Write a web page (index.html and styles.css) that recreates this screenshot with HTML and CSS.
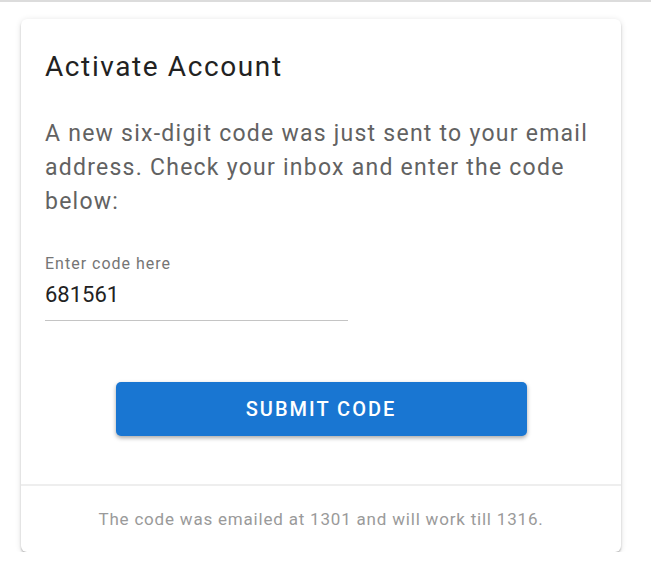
FILE: index.html
```html
<!DOCTYPE html>
<html lang="en">
<head>
<meta charset="utf-8">
<title>Activate Account</title>
<link rel="stylesheet" href="styles.css">
</head>
<body>
<div class="topbar"></div>
<main class="page">
  <section class="card">
    <div class="card-body">
      <h1 class="title">Activate Account</h1>
      <p class="lead">A new six-digit code was just sent to your email address. Check your inbox and enter the code below:</p>
      <label class="field">
        <span class="field-label">Enter code here</span>
        <input class="field-input" type="text" value="681561">
      </label>
      <div class="actions">
        <button class="btn" type="button">SUBMIT CODE</button>
      </div>
    </div>
    <div class="card-footer">The code was emailed at 1301 and will work till 1316.</div>
  </section>
</main>
</body>
</html>
```

FILE: styles.css
```css
html, body {
  margin: 0;
  padding: 0;
  background: #ffffff;
  font-family: Roboto, "Liberation Sans", sans-serif;
}
.topbar {
  height: 2px;
  background: #dcdcdc;
}
.page {
  padding: 17px 29px 0 21px;
}
.card {
  width: 600px;
  background: #fff;
  border-radius: 6px;
  box-shadow: 0 2px 2px rgba(0,0,0,0.22), 0 1px 6px rgba(0,0,0,0.12);
  overflow: hidden;
}
.card-body {
  padding: 28px 24px 48px 24px;
}
.title {
  margin: 0;
  font-size: 28px;
  line-height: 40px;
  font-weight: 400;
  letter-spacing: 1.6px;
  color: #222;
}
.lead {
  margin: 30px 0 0 0;
  font-size: 23px;
  line-height: 34px;
  color: #626262;
  letter-spacing: 1.25px;
}
.field {
  display: flex;
  flex-direction: column;
  width: 303px;
  margin-top: 35px;
}
.field-label {
  font-size: 16px;
  line-height: 20px;
  letter-spacing: 1px;
  color: #757575;
}
.field-input {
  border: none;
  border-bottom: 1px solid #c4c4c4;
  padding: 6px 0 10px 0;
  font-family: inherit;
  font-size: 22px;
  line-height: 30px;
  color: #222;
  outline: none;
  background: transparent;
}
.actions {
  display: flex;
  justify-content: center;
  margin-top: 61px;
}
.btn {
  width: 411px;
  height: 54px;
  border: none;
  border-radius: 5px;
  background: #1976d2;
  color: #fff;
  font-family: inherit;
  font-size: 20px;
  font-weight: 500;
  letter-spacing: 2px;
  box-shadow: 0 2px 4px rgba(0,0,0,0.35);
}
.card-footer {
  border-top: 2px solid #eeeeee;
  padding: 23px 16px 23px 16px;
  text-align: center;
  font-size: 17px;
  line-height: 20px;
  letter-spacing: 0.8px;
  color: #9a9a9a;
}
```
